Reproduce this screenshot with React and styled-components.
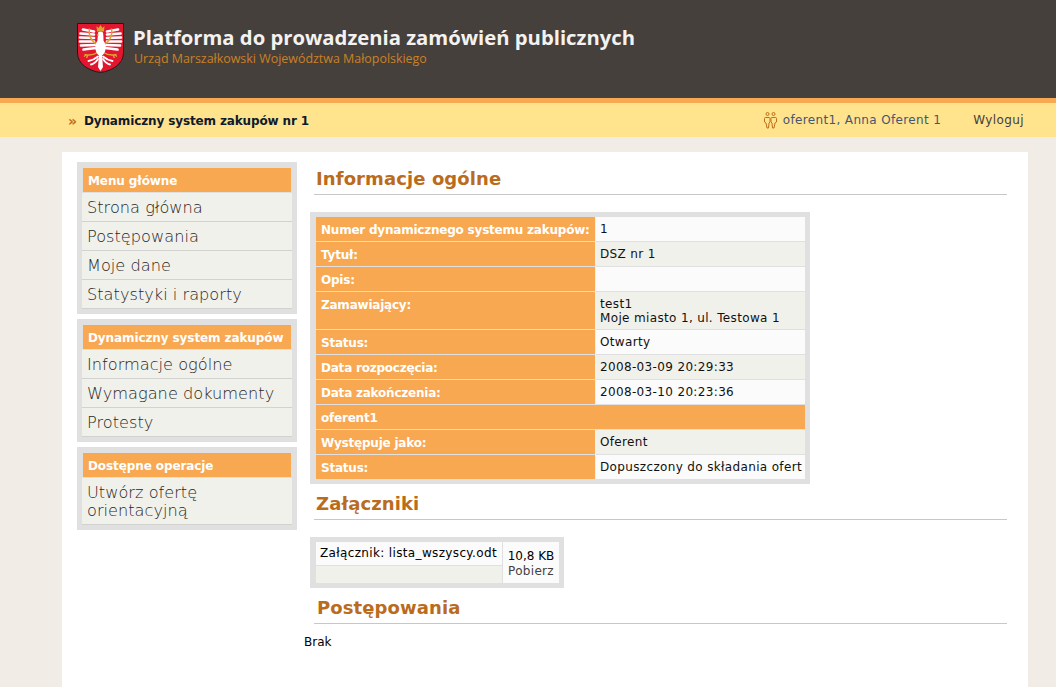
import React from "react";
import styled, { createGlobalStyle } from "styled-components";

const Global = createGlobalStyle`
  html, body { margin: 0; padding: 0; background: #f1ece6; }
  body { font-family: "DejaVu Sans", Verdana, sans-serif; font-size: 12px; color: #000; }
  #root { height: 687px; overflow: hidden; }
`;

const Header = styled.header`
  height: 98px;
  background: #46403d;
  display: flex;
  align-items: flex-start;
  padding: 23px 0 0 77px;
  box-sizing: border-box;
  gap: 9px;
`;
const Brand = styled.div`display: flex; flex-direction: column;`;
const Title = styled.div`
  font-family: "Open Sans", sans-serif;
  font-weight: 700;
  font-size: 20.25px;
  line-height: 28px;
  color: #f4f2f0;
  white-space: nowrap;
`;
const Subtitle = styled.div`
  font-family: "Open Sans", sans-serif;
  font-size: 12.45px;
  line-height: 14px;
  margin: 1px 0 0 1px;
  color: #ca8024;
  white-space: nowrap;
`;
const TopBar = styled.div`
  height: 34px;
  border-top: 5px solid #f9a852;
  background: #ffe38d;
  display: flex;
  align-items: center;
  padding: 0 32px 0 68px;
`;
const Crumb = styled.div`
  flex: 1;
  margin-top: 2px;
  font-size: 12px;
  font-weight: 700;
  letter-spacing: -0.13px;
  color: #0e1a2e;
  display: flex;
  align-items: center;
  gap: 7px;
`;
const Chevrons = styled.span`color: #c26c16; font-size: 14px; line-height: 12px; font-weight: 700;`;
const User = styled.div`
  display: flex;
  align-items: center;
  gap: 6px;
  font-size: 12px;
  letter-spacing: 0.35px;
  color: #475572;
`;
const Logout = styled.a`
  margin-left: 32px;
  font-size: 12px;
  letter-spacing: 0.4px;
  color: #46403d;
`;
const Page = styled.div`
  margin: 15px 28px 0 62px;
  height: 535px;
  background: #fff;
  padding: 10px 21px 0 15px;
  display: flex;
  align-items: flex-start;
  gap: 7px;
`;
const Sidebar = styled.nav`
  width: 220px;
  flex: none;
  display: flex;
  flex-direction: column;
  gap: 5px;
`;
const MenuBox = styled.div`
  background: #e0e0e0;
  padding: 6px 5px 5px;
`;
const MenuHead = styled.div`
  margin: 0 1px 1px;
  height: 24px;
  line-height: 26px;
  padding-left: 5px;
  background: #f9a852;
  color: #fff;
  font-size: 12px;
  font-weight: 700;
  letter-spacing: -0.1px;
`;
const MenuItem = styled.a`
  display: block;
  background: #f1f1ec;
  color: #2b2623;
  font-size: 16.2px;
  font-weight: 200;
  line-height: 18px;
  padding: 6px 5px 4px;
  border-bottom: 1px solid #d2d2d0;
`;
const Main = styled.main`
  flex: 1;
  min-width: 0;
`;
const Heading = styled.h2`
  margin: ${p => (p.$first ? "4px" : "7px")} 0 ${p => (p.$tight ? "0" : "17px")} 10px;
  height: 27px;
  padding: 1px 0 0 ${p => p.$indent || 2}px;
  font-size: 18px;
  letter-spacing: 0.1px;
  line-height: 24px;
  font-weight: 700;
  color: #bb6b1c;
  border-bottom: 1px solid #c8c8c8;
`;
const Table = styled.table`
  margin-left: 6px;
  width: ${p => p.$w}px;
  table-layout: fixed;
  border-collapse: separate;
  border-spacing: 0;
  background: #e0e0e0;
  padding: 5px 5px 5px 6px;
  font-size: 12px;
  & td, & th { padding: 0; }
  & tr:last-child th, & tr:last-child td { border-bottom: 0; }
`;
const Label = styled.th`
  background: #f9a852;
  color: #fff;
  text-align: left;
  vertical-align: top;
  font-weight: 700;
  font-size: 12px;
  letter-spacing: -0.22px;
  line-height: 15px;
  && { padding: 6px 5px 3px; }
  width: 269px;
  white-space: nowrap;
  border-bottom: 1px solid #e0e0e0;
  border-right: 1px solid #f1f1ec;
`;
const Value = styled.td`
  background: ${p => (p.$alt ? "#f1f1ec" : "#fbfbfb")};
  color: #111;
  vertical-align: top;
  line-height: 14px;
  letter-spacing: 0.35px;
  && { padding: 5px 4px 4px 4px; }
  white-space: nowrap;
  overflow: visible;
  border-bottom: 1px solid #e0e0e0;
`;
const Section = styled(Label)`width: auto; border-right: 0;`;
const FileName = styled.td`
  box-sizing: border-box;
  width: 187px;
  background: ${p => (p.$alt ? "#f1f1ec" : "#fbfbfb")};
  border-bottom: ${p => (p.$alt ? "0" : "1px solid #e0e0e0")};
  border-right: 1px solid #e0e0e0;
  white-space: nowrap;
  line-height: 14px;
  letter-spacing: 0.35px;
  vertical-align: top;
  && { padding: ${p => (p.$alt ? "0" : "4px 4px 5px 4px")}; }
  height: ${p => (p.$alt ? "17px" : "24px")};
`;
const FileSize = styled.td`
  background: #fbfbfb;
  text-align: center;
  line-height: 15px;
  vertical-align: top;
  white-space: nowrap;
  && { padding: 7px 0 4px; }
`;
const Download = styled.a`display: block; color: #46403d; letter-spacing: 0.3px;`;
const Empty = styled.div`font-size: 12px; line-height: 14px; margin-top: 11px; color: #000;`;

const wing = (
  <>
    <g fill="none" stroke="#fff" strokeWidth="2.7" strokeLinecap="round">
      <path d="M17 8.500 6 6.500M17 11.500 3.500 10.500M17 15 3 14.500M17 18.500 3 18.500M18 22 4 22.500M19 25 6.500 26.500" />
      <path d="M21 33.500C18 36 15 37.500 11.500 38M21 36C19 39 17 41 14 41.500" strokeWidth="1.800" />
    </g>
    <path d="M12.500 5.500C11 11 13.500 18 21 22" fill="none" stroke="#d9a52e" strokeWidth="1.500" />
    <path d="M20.500 29.500C16 32.500 12 32.500 7.500 31.500M10 31.500 7 33.500M11 32 9.500 35" fill="none" stroke="#d9a52e" strokeWidth="1.400" />
  </>
);

function Crest() {
  return (
    <svg width="47" height="50" viewBox="0 0 47 50">
      <path d="M.5.500H46.500V30C46.500 41 35 48 23.500 49.500 12 48 .5 41 .5 30Z" fill="#e2162f" stroke="#20181a" />
      {wing}
      <g transform="matrix(-1 0 0 1 47 0)">{wing}</g>
      <path d="M21 9.500c1-1.500 4-1.500 5 0 .5 3 .5 6 .5 8 2 3 2.500 6 2 9-.5 3-2 5-3.500 6h-3c-1.500-1-3-3-3.500-6-.5-3 0-6 2-9 0-3 .5-5 .5-8Z" fill="#fff" />
      <path d="M19.500 12 21.500 10.500 21.500 13Z" fill="#d9a52e" />
      <path d="M22 32h3l1 12-2.500 4-2.500-4Z" fill="#fff" />
      <path d="M19.500 3 21.500 5 23.500 2 25.500 5 27.500 3 27 8.500H20Z" fill="#d9a52e" />
    </svg>
  );
}

function People() {
  return (
    <svg width="13" height="17" viewBox="0 0 13 17" fill="none" stroke="#bf6f17" strokeWidth="1">
      <circle cx="3.500" cy="2" r="1.500" />
      <circle cx="9.500" cy="2" r="1.500" />
      <path d="M.5 6.500C.5 5.500 1 5.500 2 5.500H5C6 5.500 6 6 6 7V10L5 11 4.500 16H3L2 11 .5 10Z" />
      <path d="M12.500 6.500C12.500 5.500 12 5.500 11 5.500H8C7 5.500 7 6 7 7V10L8 11 8.500 16H10L11 11 12.500 10Z" />
    </svg>
  );
}

const menus = [
  { head: "Menu główne", items: ["Strona główna", "Postępowania", "Moje dane", "Statystyki i raporty"] },
  { head: "Dynamiczny system zakupów", items: ["Informacje ogólne", "Wymagane dokumenty", "Protesty"] },
  { head: "Dostępne operacje", items: [<>Utwórz ofertę<br />orientacyjną</>] },
];

const rows = [
  ["Numer dynamicznego systemu zakupów:", "1"],
  ["Tytuł:", "DSZ nr 1"],
  ["Opis:", "\u00a0"],
  ["Zamawiający:", <>test1<br />Moje miasto 1, ul. Testowa 1</>],
  ["Status:", "Otwarty"],
  ["Data rozpoczęcia:", "2008-03-09 20:29:33"],
  ["Data zakończenia:", "2008-03-10 20:23:36"],
  ["oferent1", null],
  ["Występuje jako:", "Oferent"],
  ["Status:", "Dopuszczony do składania ofert"],
];

export default function App() {
  return (
    <>
      <Global />
      <Header>
        <Crest />
        <Brand>
          <Title>Platforma do prowadzenia zamówień publicznych</Title>
          <Subtitle>Urząd Marszałkowski Województwa Małopolskiego</Subtitle>
        </Brand>
      </Header>
      <TopBar>
        <Crumb><Chevrons>»</Chevrons>Dynamiczny system zakupów nr 1</Crumb>
        <User><People />oferent1, Anna Oferent 1</User>
        <Logout>Wyloguj</Logout>
      </TopBar>
      <Page>
        <Sidebar>
          {menus.map(m => (
            <MenuBox key={m.head}>
              <MenuHead>{m.head}</MenuHead>
              {m.items.map((it, i) => <MenuItem key={i}>{it}</MenuItem>)}
            </MenuBox>
          ))}
        </Sidebar>
        <Main>
          <Heading $first>Informacje ogólne</Heading>
          <Table $w={500}>
            <tbody>
              {rows.map((r, i) => (
                <tr key={i}>
                  {r[1] === null
                    ? <Section colSpan={2}>{r[0]}</Section>
                    : <><Label>{r[0]}</Label><Value $alt={(i % 2 === 1 && i < 7) || i === 8}>{r[1]}</Value></>}
                </tr>
              ))}
            </tbody>
          </Table>
          <Heading>Załączniki</Heading>
          <Table $w={254}>
            <tbody>
              <tr>
                <FileName>Załącznik: lista_wszyscy.odt</FileName>
                <FileSize rowSpan={2}>10,8 KB<Download>Pobierz</Download></FileSize>
              </tr>
              <tr><FileName $alt /></tr>
            </tbody>
          </Table>
          <Heading $tight $indent={3}>Postępowania</Heading>
          <Empty>Brak</Empty>
        </Main>
      </Page>
    </>
  );
}
